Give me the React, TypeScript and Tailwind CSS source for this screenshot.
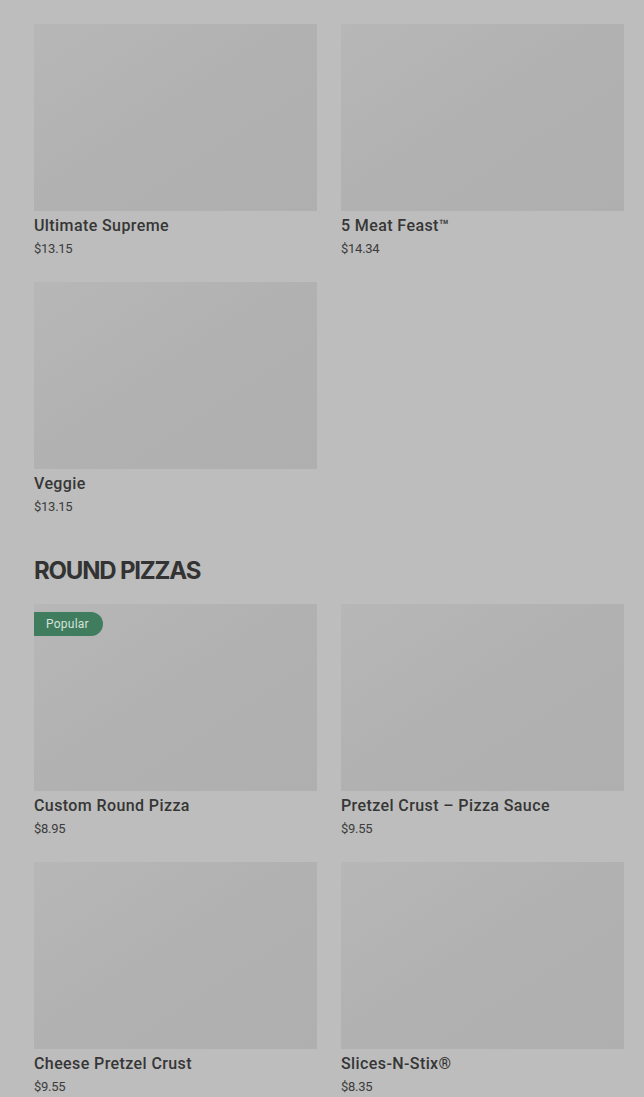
import React from "react";

type Item = { name: string; price: string; popular?: boolean };

const top: Item[] = [
  { name: "Ultimate Supreme", price: "$13.15" },
  { name: "5 Meat Feast™", price: "$14.34" },
  { name: "Veggie", price: "$13.15" },
];

const round: Item[] = [
  { name: "Custom Round Pizza", price: "$8.95", popular: true },
  { name: "Pretzel Crust – Pizza Sauce", price: "$9.55" },
  { name: "Cheese Pretzel Crust", price: "$9.55" },
  { name: "Slices-N-Stix®", price: "$8.35" },
];

function Card({ item }: { item: Item }) {
  return (
    <div className="flex flex-col">
      <div className="relative h-[187px] w-full bg-gradient-to-br from-[#b7b7b7] via-[#b1b1b1] to-[#afafaf]">
        {item.popular && (
          <span className="absolute left-0 top-[8px] flex h-[24px] items-center rounded-r-full bg-[#3f7d5e] pl-[12px] pr-[14px] text-[12px] leading-none tracking-[0.02em] text-[#d6e2db]">
            Popular
          </span>
        )}
      </div>
      <div className="mt-[5px] text-[16px] font-medium leading-[20px] tracking-[0.025em] text-[#363636]">
        {item.name}
      </div>
      <div className="mt-[4px] text-[13px] leading-[18px] tracking-[-0.02em] text-[#3c3c3c]">
        {item.price}
      </div>
    </div>
  );
}

export default function App() {
  return (
    <div
      className="min-h-[1097px] w-[644px] overflow-hidden bg-[#bdbdbd] pl-[34px] pr-[20px] pt-[24px]"
      style={{ fontFamily: "Roboto, 'Noto Sans', sans-serif" }}
    >
      <div className="grid grid-cols-2 gap-x-[24px] gap-y-[24px]">
        {top.map((i) => (
          <Card key={i.name} item={i} />
        ))}
      </div>
      <h2
        className="mt-[41px] text-[24px] font-bold leading-[28px] tracking-[-0.05em] text-[#333333]"
        style={{ fontFamily: "Inter, 'Noto Sans', sans-serif" }}
      >
        ROUND PIZZAS
      </h2>
      <div className="mt-[19px] grid grid-cols-2 gap-x-[24px] gap-y-[24px]">
        {round.map((i) => (
          <Card key={i.name} item={i} />
        ))}
      </div>
    </div>
  );
}
